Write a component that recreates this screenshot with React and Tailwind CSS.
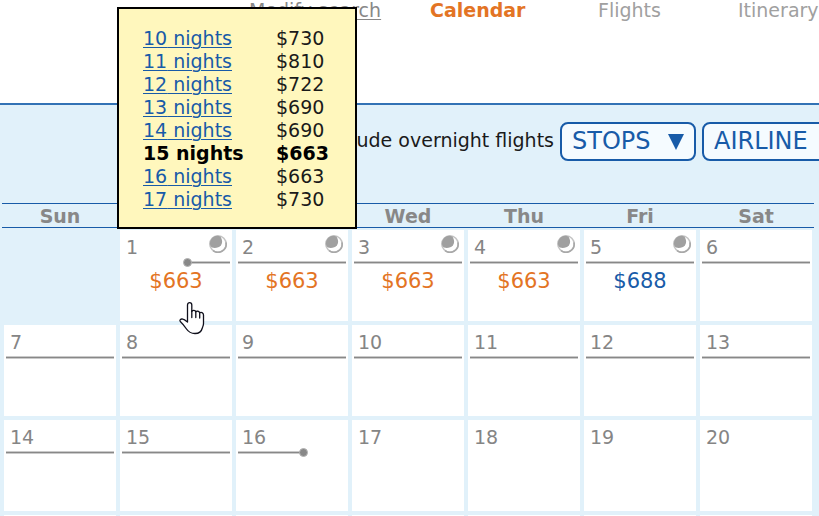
import React from 'react';
import clsx from 'clsx';

const stays = [
  { nights: 10, price: 730 },
  { nights: 11, price: 810 },
  { nights: 12, price: 722 },
  { nights: 13, price: 690 },
  { nights: 14, price: 690 },
  { nights: 15, price: 663 },
  { nights: 16, price: 663 },
  { nights: 17, price: 730 },
];

const weekdays = ['Sun', 'Mon', 'Tue', 'Wed', 'Thu', 'Fri', 'Sat'];

const weeks = [
  [null, 1, 2, 3, 4, 5, 6],
  [7, 8, 9, 10, 11, 12, 13],
  [14, 15, 16, 17, 18, 19, 20],
  [21, 22, 23, 24, 25, 26, 27],
];

const fares = { 1: 663, 2: 663, 3: 663, 4: 663, 5: 688 };
const lowest = 663;
const tripStart = 1;
const tripEnd = 16;

const MoonIcon = () => (
  <svg className="mt-[5px] mr-[5px] h-[18px] w-[18px]" viewBox="0 0 18 18" aria-hidden="true">
    <circle cx="9" cy="9" r="8.200" fill="#fff" stroke="#c4c4c4" strokeWidth="1.600" />
    <path d="M17 7.500A8.200 8.200 0 0 1 4 15.600" fill="none" stroke="#a8a8a8" strokeWidth="1.600" />
    <path d="M2 4.500A8 8 0 0 1 11.500 1.500C13.500 5 13.600 8 12 10.200 10.200 12.600 6.500 13.400 3 12.600 .4 10.500.4 7 2 4.500z" fill="#a0a0a0" />
  </svg>
);

const HandCursor = () => (
  <svg
    className="pointer-events-none absolute top-[71px] left-[59px] z-10 h-[34px] w-[26px]"
    viewBox="0 0 26 34"
    aria-hidden="true"
  >
    <path
      d="M8.500 21V4c0-3.300 4.300-3.300 4.300 0v6.500c.6-1.600 3.600-1.400 4 .4.800-1.200 3.500-.8 3.900.9 1.200-.9 3.800-.3 3.800 2.200v8.500c0 2-.7 3-1.200 4.500-.8 3.500-3.300 5.500-7.300 5.500-4.500 0-6.500-1.500-8.500-4.500-2-3-3.500-5-6-7.300-1.600-1.500.3-3.200 2.400-2.500 1.800.5 3 1.600 4.600 2.800z"
      fill="#fff"
      stroke="#10101c"
      strokeWidth="1.300"
      strokeLinejoin="round"
    />
    <path d="M12.800 10v6.500M16.800 11v5.500M20.700 12v5" fill="none" stroke="#10101c" strokeWidth="1.300" strokeLinecap="round" />
  </svg>
);

const Dot = () => (
  <span className="absolute -top-[3px] left-[61px] h-[9px] w-[9px] rounded-full border border-[#b4b4b4] bg-[#888]" />
);

const TripLine = ({ day }) => {
  if (day > tripEnd) return null;
  const isEnd = day === tripStart || day === tripEnd;
  return (
    <div className="relative mx-[2px] h-[3px]">
      <div
        className={clsx(
          'h-[3px] border-y border-[#cacaca] bg-[#888]',
          day === tripStart && 'ml-[65px]',
          day === tripEnd && 'w-[65px]'
        )}
      />
      {isEnd && <Dot />}
    </div>
  );
};

const StayPopup = () => (
  <div className="absolute bottom-full -left-[3px] z-20 mb-px w-[240px] border-2 border-black bg-[#fff7bd] pt-[18px] pb-4 pl-6">
    <table className="border-separate border-spacing-0 text-left text-[19px] leading-[23px] text-[#1a1a1a]">
      <tbody>
        {stays.map(({ nights, price }) => {
          const selected = nights === 15;
          return (
            <tr key={nights} className={clsx(selected && 'font-bold text-black')}>
              <td className="w-[133px] p-0 whitespace-nowrap">
                {selected ? (
                  `${nights} nights`
                ) : (
                  <a href="#" className="text-[#185ba8] underline decoration-1 underline-offset-2">{nights} nights</a>
                )}
              </td>
              <td className="p-0">${price}</td>
            </tr>
          );
        })}
      </tbody>
    </table>
  </div>
);

const DayCell = ({ day }) => {
  if (!day) return <td />;
  const fare = fares[day];
  return (
    <td className="p-[2px]">
      <div className="relative h-[91px] bg-white">
        <div className="flex h-[31px] items-start justify-between pl-[6px]">
          <span className="pt-[6px] text-[19px] leading-[23px] text-[#858585]">{day}</span>
          {fare && <MoonIcon />}
        </div>
        <TripLine day={day} />
        {fare && (
          <div className={clsx('pt-1 text-center text-[21px] leading-[26px]', fare === lowest ? 'text-[#e37424]' : 'text-[#185ba8]')}>
            ${fare}
          </div>
        )}
        {day === tripStart && <StayPopup />}
        {day === tripStart && <HandCursor />}
      </div>
    </td>
  );
};

const FilterSelect = ({ label, className }) => (
  <div className={clsx('relative shrink-0', className)}>
    <select
      aria-label={label}
      className="h-[39px] w-full appearance-none rounded-lg border-2 border-[#185ba8] bg-[#f5fbff] pr-8 pl-[10px] text-[24px] leading-[35px] text-[#185ba8]"
    >
      <option>{label}</option>
    </select>
    <svg className="pointer-events-none absolute top-3 right-3 h-4 w-4" viewBox="0 0 16 16" aria-hidden="true">
      <path d="M0 0h16L8 16z" fill="#185ba8" />
    </svg>
  </div>
);

export default function App() {
  return (
    <div className="flex min-h-screen flex-col overflow-hidden bg-white font-['DejaVu_Sans',sans-serif]">
      <nav className="h-[103px] shrink-0 pl-[249px] text-[19px] leading-[21px] whitespace-nowrap">
        <ul className="flex">
          <li className="w-[181px] shrink-0">
            <a href="#" className="text-[#888] underline decoration-1 underline-offset-2">Modify search</a>
          </li>
          <li className="w-[168px] shrink-0 font-bold text-[#e37424]">Calendar</li>
          <li className="w-[140px] shrink-0 text-[#a0a0a0]">Flights</li>
          <li className="shrink-0 text-[#a0a0a0]">Itinerary</li>
        </ul>
      </nav>

      <main className="grow border-t-2 border-[#3272b5] bg-[#e1f1fa]">
        <div className="flex items-center gap-[6px] pt-[17px] pl-[280px] whitespace-nowrap">
          <label className="flex w-[274px] shrink-0 items-center justify-end gap-2 pb-[2px] text-[19px] leading-[23px] text-[#1a1a1a]">
            <input type="checkbox" defaultChecked />
            Include overnight flights
          </label>
          <FilterSelect label="STOPS" className="w-[136px]" />
          <FilterSelect label="AIRLINE" className="w-[160px]" />
        </div>

        <div className="mt-[42px] pr-[5px] pl-[2px]">
          <table className="w-full table-fixed border-separate border-spacing-0">
            <thead>
              <tr>
                {weekdays.map((name) => (
                  <th key={name} className="h-[25px] border-y border-[#185ba8] pt-[2px] pb-0 text-[19px] leading-[21px] font-bold text-[#888]">
                    {name}
                  </th>
                ))}
              </tr>
            </thead>
            <tbody>
              {weeks.map((week, i) => (
                <tr key={i}>
                  {week.map((day, j) => (
                    <DayCell key={j} day={day} />
                  ))}
                </tr>
              ))}
            </tbody>
          </table>
        </div>
      </main>
    </div>
  );
}
